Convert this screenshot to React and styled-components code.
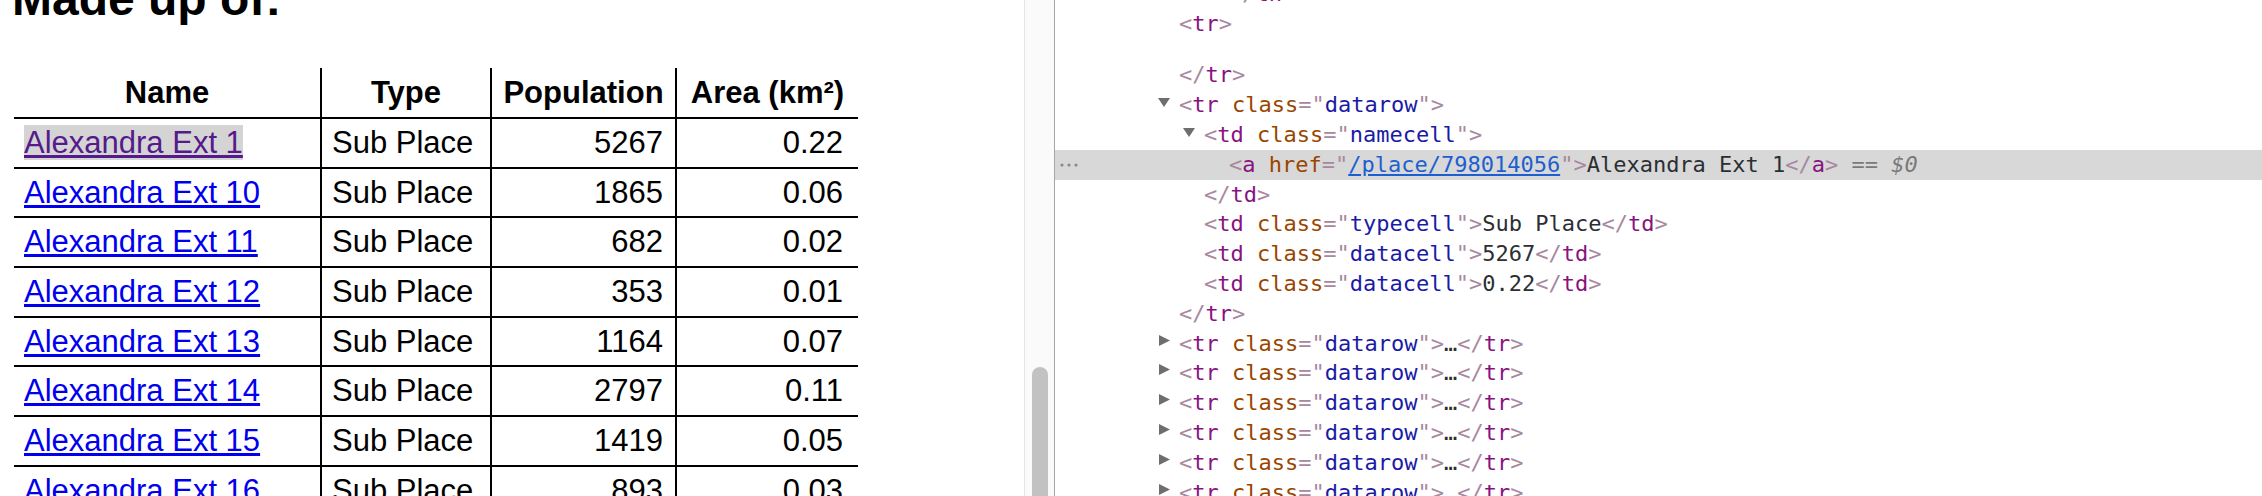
import React from 'react'
import styled, { createGlobalStyle } from 'styled-components'

const GlobalStyle = createGlobalStyle`
    html, body {
        margin: 0;
        padding: 0;
        background: #fff;
    }
    body {
        overflow: hidden;
    }
`

const Window = styled.div`
    display: flex;
    width: 2262px;
    height: 496px;
    overflow: hidden;
    background: #fff;
`

/* ---------- page side ---------- */

const PagePane = styled.div`
    width: 1024px;
    flex: none;
    overflow: hidden;
    padding-left: 14px;
    box-sizing: border-box;
    font-family: "Liberation Sans", Arial, Helvetica, sans-serif;
    color: #000;
`

const Heading = styled.h2`
    margin: -25px 0 0 -2px;
    font-size: 48px;
    line-height: 48px;
    font-weight: bold;
    white-space: nowrap;
`

const PlacesTable = styled.table`
    margin-top: 45px;
    width: 844px;
    table-layout: fixed;
    border-collapse: separate;
    border-spacing: 0;
    font-size: 31px;
`

const HeadRow = styled.tr`
    height: 49px;
`

const DataRow = styled.tr`
    height: 49.7px;
`

const HeadCell = styled.th`
    width: ${props => props.$w}px;
    box-sizing: border-box;
    padding: 0 6px;
    text-align: center;
    font-weight: bold;
    white-space: nowrap;
    border-right: 2px solid #000;

    &:last-child {
        border-right: none;
    }
`

const Cell = styled.td`
    box-sizing: border-box;
    padding: 0 ${props => (props.$align === 'right' ? '12px' : '10px')} 0 10px;
    text-align: ${props => props.$align || 'left'};
    white-space: nowrap;
    overflow: hidden;
    border-top: 2px solid #000;
    border-right: 2px solid #000;

    &:last-child {
        border-right: none;
        padding-right: 15px;
    }
`

const PlaceLink = styled.a`
    color: ${props => (props.$visited ? '#551a8b' : '#0000ee')};
    background: ${props => (props.$inspected ? '#d4d4d4' : 'transparent')};
    text-decoration: underline;
    cursor: pointer;
`

/* ---------- scrollbar between the panes ---------- */

const ScrollTrack = styled.div`
    width: 31px;
    flex: none;
    box-sizing: border-box;
    border-left: 1px solid #e6e6e6;
    border-right: 1px solid #a6a6a6;
    background: #fafafa;
    padding: 367px 0 0 7px;
    overflow: hidden;
`

const ScrollThumb = styled.div`
    width: 16px;
    height: 200px;
    border-radius: 8px;
    background: #c2c2c2;
`

/* ---------- inspector side ---------- */

const Inspector = styled.div`
    flex: 1;
    overflow: hidden;
    font-family: "DejaVu Sans Mono", Menlo, monospace;
    font-size: 22px;
    line-height: 29.8px;
    color: #2b2f33;
`

const NodeList = styled.div`
    margin-top: -21px;
`

const NodeLine = styled.div`
    position: relative;
    height: 29.8px;
    padding-left: ${props => 124 + props.$depth * 25}px;
    background: ${props => (props.$selected ? '#d8d8d8' : 'transparent')};
    white-space: pre;
`

const BlankLine = styled.div`
    height: 21.8px;
`

const Toggle = styled.span`
    display: inline-block;
    width: 21px;
    margin-left: -21px;

    svg {
        vertical-align: 5px;
    }
`

const Gutter = styled.span`
    position: absolute;
    left: 5px;
    top: 50%;
    transform: translateY(-50%);
    display: flex;
`

const tokenColors = {
    punct: '#a8889f',
    tag: '#881280',
    attr: '#994500',
    value: '#1a1aa6',
    link: '#1d5fd0',
    text: '#2b2f33',
    muted: '#7a7a7a',
}

const Token = styled.span`
    color: ${props => tokenColors[props.$kind]};
    text-decoration: ${props => (props.$kind === 'link' ? 'underline' : 'none')};
    font-style: ${props => (props.$italic ? 'italic' : 'normal')};
`

const DownArrow = () => (
    <svg width="12" height="10" viewBox="0 0 12 10">
        <path d="M0 1 H12 L6 10 Z" fill="#6e6e6e" />
    </svg>
)

const RightArrow = () => (
    <svg width="13" height="11" viewBox="0 0 13 11">
        <path d="M1 0 L12 5.5 L1 11 Z" fill="#6e6e6e" />
    </svg>
)

const Dots = () => (
    <svg width="20" height="4" viewBox="0 0 20 4">
        <circle cx="2" cy="2" r="1.6" fill="#8a8a8a" />
        <circle cx="9" cy="2" r="1.6" fill="#8a8a8a" />
        <circle cx="16" cy="2" r="1.6" fill="#8a8a8a" />
    </svg>
)

function OpenTag({ name, attr, value, link }) {
    return (
        <>
            <Token $kind="punct">&lt;</Token>
            <Token $kind="tag">{name}</Token>
            {attr && (
                <>
                    {' '}
                    <Token $kind="attr">{attr}</Token>
                    <Token $kind="punct">="</Token>
                    <Token $kind={link ? 'link' : 'value'}>{value}</Token>
                    <Token $kind="punct">"</Token>
                </>
            )}
            <Token $kind="punct">&gt;</Token>
        </>
    )
}

function CloseTag({ name }) {
    return (
        <>
            <Token $kind="punct">&lt;/</Token>
            <Token $kind="tag">{name}</Token>
            <Token $kind="punct">&gt;</Token>
        </>
    )
}

const places = [
    { name: 'Alexandra Ext 1', pop: '5267', area: '0.22', visited: true },
    { name: 'Alexandra Ext 10', pop: '1865', area: '0.06' },
    { name: 'Alexandra Ext 11', pop: '682', area: '0.02' },
    { name: 'Alexandra Ext 12', pop: '353', area: '0.01' },
    { name: 'Alexandra Ext 13', pop: '1164', area: '0.07' },
    { name: 'Alexandra Ext 14', pop: '2797', area: '0.11' },
    { name: 'Alexandra Ext 15', pop: '1419', area: '0.05' },
    { name: 'Alexandra Ext 16', pop: '893', area: '0.03' },
]

function App() {
    return (
        <>
            <GlobalStyle />
            <Window>
                <PagePane>
                    <Heading>Made up of:</Heading>
                    <PlacesTable>
                        <thead>
                            <HeadRow>
                                <HeadCell $w={308}>Name</HeadCell>
                                <HeadCell $w={170}>Type</HeadCell>
                                <HeadCell $w={185}>Population</HeadCell>
                                <HeadCell $w={181}>Area (km²)</HeadCell>
                            </HeadRow>
                        </thead>
                        <tbody>
                            {places.map((p, i) => (
                                <DataRow key={p.name}>
                                    <Cell>
                                        <PlaceLink $visited={p.visited} $inspected={i === 0}>
                                            {p.name}
                                        </PlaceLink>
                                    </Cell>
                                    <Cell>Sub Place</Cell>
                                    <Cell $align="right">{p.pop}</Cell>
                                    <Cell $align="right">{p.area}</Cell>
                                </DataRow>
                            ))}
                        </tbody>
                    </PlacesTable>
                </PagePane>

                <ScrollTrack>
                    <ScrollThumb />
                </ScrollTrack>

                <Inspector>
                    <NodeList>
                        <NodeLine $depth={2}>
                            <CloseTag name="th" />
                        </NodeLine>
                        <NodeLine $depth={0}>
                            <OpenTag name="tr" />
                        </NodeLine>
                        <BlankLine />
                        <NodeLine $depth={0}>
                            <CloseTag name="tr" />
                        </NodeLine>
                        <NodeLine $depth={0}>
                            <Toggle><DownArrow /></Toggle>
                            <OpenTag name="tr" attr="class" value="datarow" />
                        </NodeLine>
                        <NodeLine $depth={1}>
                            <Toggle><DownArrow /></Toggle>
                            <OpenTag name="td" attr="class" value="namecell" />
                        </NodeLine>
                        <NodeLine $depth={2} $selected>
                            <Gutter><Dots /></Gutter>
                            <OpenTag name="a" attr="href" value="/place/798014056" link />
                            <Token $kind="text">Alexandra Ext 1</Token>
                            <CloseTag name="a" />
                            {' '}
                            <Token $kind="muted">==</Token>
                            {' '}
                            <Token $kind="muted" $italic>$0</Token>
                        </NodeLine>
                        <NodeLine $depth={1}>
                            <CloseTag name="td" />
                        </NodeLine>
                        <NodeLine $depth={1}>
                            <OpenTag name="td" attr="class" value="typecell" />
                            <Token $kind="text">Sub Place</Token>
                            <CloseTag name="td" />
                        </NodeLine>
                        <NodeLine $depth={1}>
                            <OpenTag name="td" attr="class" value="datacell" />
                            <Token $kind="text">5267</Token>
                            <CloseTag name="td" />
                        </NodeLine>
                        <NodeLine $depth={1}>
                            <OpenTag name="td" attr="class" value="datacell" />
                            <Token $kind="text">0.22</Token>
                            <CloseTag name="td" />
                        </NodeLine>
                        <NodeLine $depth={0}>
                            <CloseTag name="tr" />
                        </NodeLine>
                        {[0, 1, 2, 3, 4, 5].map(n => (
                            <NodeLine key={n} $depth={0}>
                                <Toggle><RightArrow /></Toggle>
                                <OpenTag name="tr" attr="class" value="datarow" />
                                <Token $kind="text">…</Token>
                                <CloseTag name="tr" />
                            </NodeLine>
                        ))}
                    </NodeList>
                </Inspector>
            </Window>
        </>
    )
}

export default App
